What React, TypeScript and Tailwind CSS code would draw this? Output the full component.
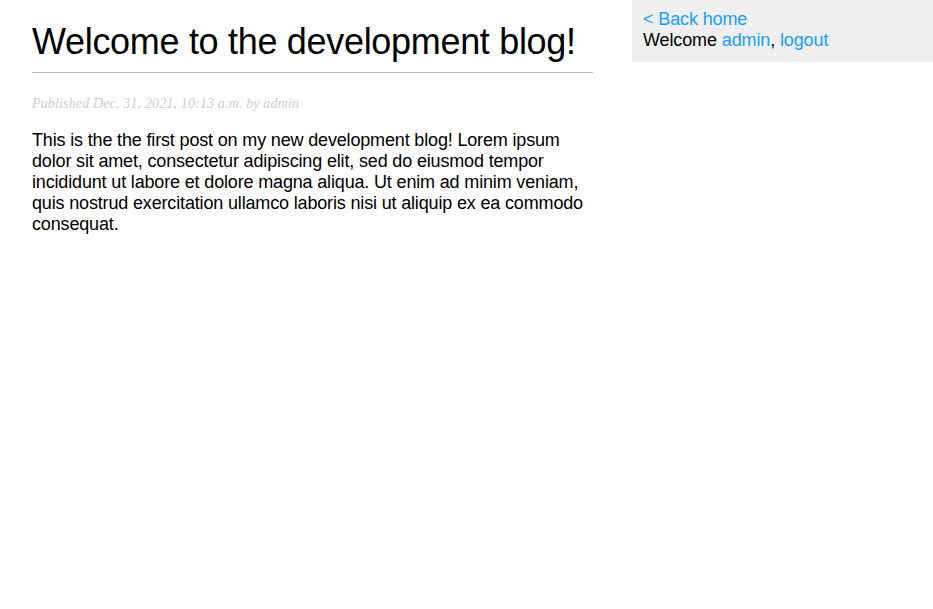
export default function App() {
  return (
    <div className="flex min-h-[609px] bg-white text-black font-['Liberation_Sans',Arial,sans-serif]">
      {/* Post */}
      <main className="ml-[32px] w-[561px]">
        <h1 className="mt-[21px] border-b border-[#bbbbbb] pb-[10px] text-[36px] leading-[41px] font-normal tracking-[-0.31px]">
          Welcome to the development blog!
        </h1>
        <div className="mt-[22px] text-[14px] leading-[17px] italic tracking-[0.15px] text-[#cccccc] font-['Liberation_Serif',Georgia,serif]">
          Published Dec. 31, 2021, 10:13 a.m. by admin
        </div>
        <p className="mt-[18px] text-[18px] leading-[21px] tracking-[-0.16px]">
          This is the the first post on my new development blog! Lorem ipsum dolor sit amet, consectetur
          adipiscing elit, sed do eiusmod tempor incididunt ut labore et dolore magna aliqua. Ut enim ad minim
          veniam, quis nostrud exercitation ullamco laboris nisi ut aliquip ex ea commodo consequat.
        </p>
      </main>

      {/* Sidebar */}
      <aside className="ml-auto w-[301px] self-start bg-[#efefef] pt-[9px] pb-[11px] pl-[11px] text-[18px] leading-[21px] tracking-[-0.12px]">
        <a href="#" className="block text-[#1a9fff]">&lt; Back home</a>
        <div>
          Welcome <a href="#" className="text-[#1a9fff]">admin</a>,{" "}
          <a href="#" className="text-[#1a9fff]">logout</a>
        </div>
      </aside>
    </div>
  );
}
